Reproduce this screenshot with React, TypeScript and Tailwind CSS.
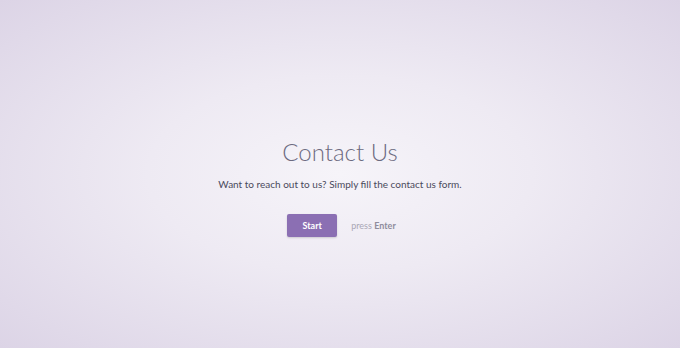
import React from "react";

export default function App() {
  return (
    <div
      className="flex h-[348px] w-[680px] flex-col items-center overflow-hidden bg-[radial-gradient(ellipse_at_50%_50%,#f6f4f9_0%,#eeeaf3_40%,#dcd4e6_100%)] text-center"
      style={{ fontFamily: "Lato, 'Open Sans', sans-serif" }}
    >
      <h1 className="mt-[135px] text-[24px] font-light leading-[33px] text-[#6c6a80]">
        Contact Us
      </h1>
      <p className="mt-[10px] text-[10px] leading-[13px] text-[#4a4a5c]">
        Want to reach out to us? Simply fill the contact us form.
      </p>
      <div className="mt-[23px] flex items-center gap-[14px] pl-[3px]">
        <button className="h-[23px] w-[50px] rounded-[2px] bg-[#8b6fb3] text-[9px] font-bold text-white shadow-[0_1px_2px_rgba(0,0,0,0.15)]">
          Start
        </button>
        <span className="text-[9px] text-[#a9a6b4]">
          press <span className="font-bold text-[#8f8c9c]">Enter</span>
        </span>
      </div>
    </div>
  );
}
